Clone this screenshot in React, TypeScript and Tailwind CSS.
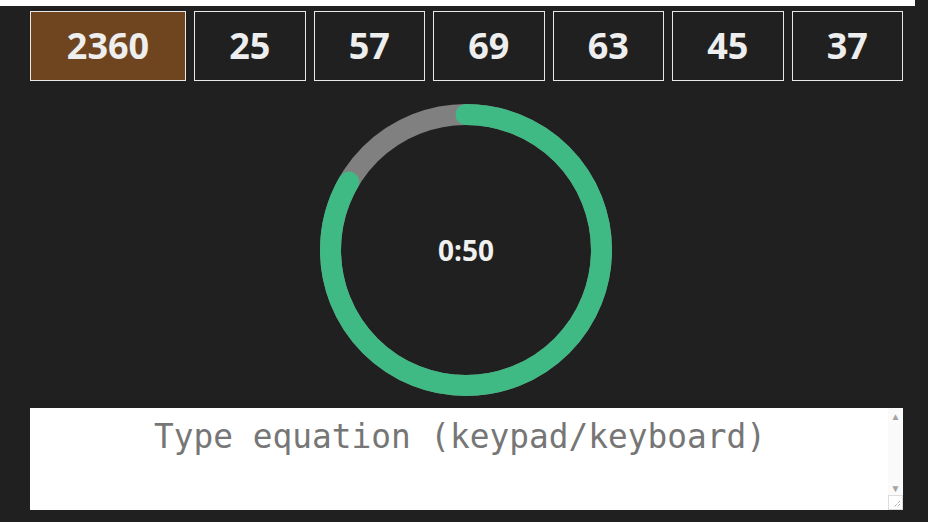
import React from "react";

const tiles = ["2360", "25", "57", "69", "63", "45", "37"];

function Timer({ seconds, total }: { seconds: number; total: number }) {
  const r = 135.5;
  const c = 2 * Math.PI * r;
  const frac = seconds / total;
  return (
    <div className="relative h-[292px] w-[292px]">
      <svg width="292" height="292" viewBox="0 0 292 292">
        <circle cx="146" cy="146" r={r} fill="none" stroke="#808080" strokeWidth="21" />
        <circle
          cx="146"
          cy="146"
          r={r}
          fill="none"
          stroke="#3fba84"
          strokeWidth="21"
          strokeLinecap="round"
          strokeDasharray={`${c * frac} ${c}`}
          transform="rotate(-90 146 146)"
        />
      </svg>
      <div className="absolute inset-0 flex items-center justify-center font-['Open_Sans',sans-serif] text-[28px] font-bold text-[#f0f0f0]">
        0:50
      </div>
    </div>
  );
}

export default function App() {
  return (
    <div className="h-[522px] w-[928px] overflow-hidden bg-[#202020]">
      <div className="h-[6px] w-[915px] bg-white" />
      <div className="flex gap-2 pl-[30px] pr-[25px] pt-[5px]">
        {tiles.map((t, i) => (
          <div
            key={t}
            className={
              "flex h-[70px] items-center justify-center border border-[#e8e8e8] font-['Open_Sans',sans-serif] text-[36px] font-bold text-[#eeeeee] " +
              (i === 0 ? "w-[156px] bg-[#6f4520]" : "flex-1 bg-[#202020]")
            }
          >
            {t}
          </div>
        ))}
      </div>
      <div className="flex justify-center pl-[4px] pt-[23px]">
        <Timer seconds={50} total={60} />
      </div>
      <div className="pl-[30px] pr-[25px] pt-[12px]">
        <div className="flex h-[102px] bg-white">
          <textarea
            placeholder="Type equation (keypad/keyboard)"
            className="block h-full flex-1 resize-none overflow-hidden bg-white pl-[2px] pt-[10px] text-center font-['DejaVu_Sans_Mono',monospace] text-[32.8px] leading-[1.2] text-[#333] outline-none placeholder:text-[#767676]"
          />
          <div className="flex w-[15px] flex-col items-center bg-[#fafafa]">
            <div className="flex h-[15px] items-center justify-center text-[10px] leading-none text-[#a3a3a3]">▲</div>
            <div className="flex-1" />
            <div className="flex h-[15px] items-center justify-center text-[10px] leading-none text-[#a3a3a3]">▼</div>
            <div className="h-[15px] w-[15px] border border-[#dcdcdc] bg-white">
              <svg width="13" height="13" viewBox="0 0 13 13">
                <path d="M11 5 L5 11 M11 8 L8 11" stroke="#888" strokeWidth="1" strokeDasharray="1 1" />
              </svg>
            </div>
          </div>
        </div>
      </div>
    </div>
  );
}
